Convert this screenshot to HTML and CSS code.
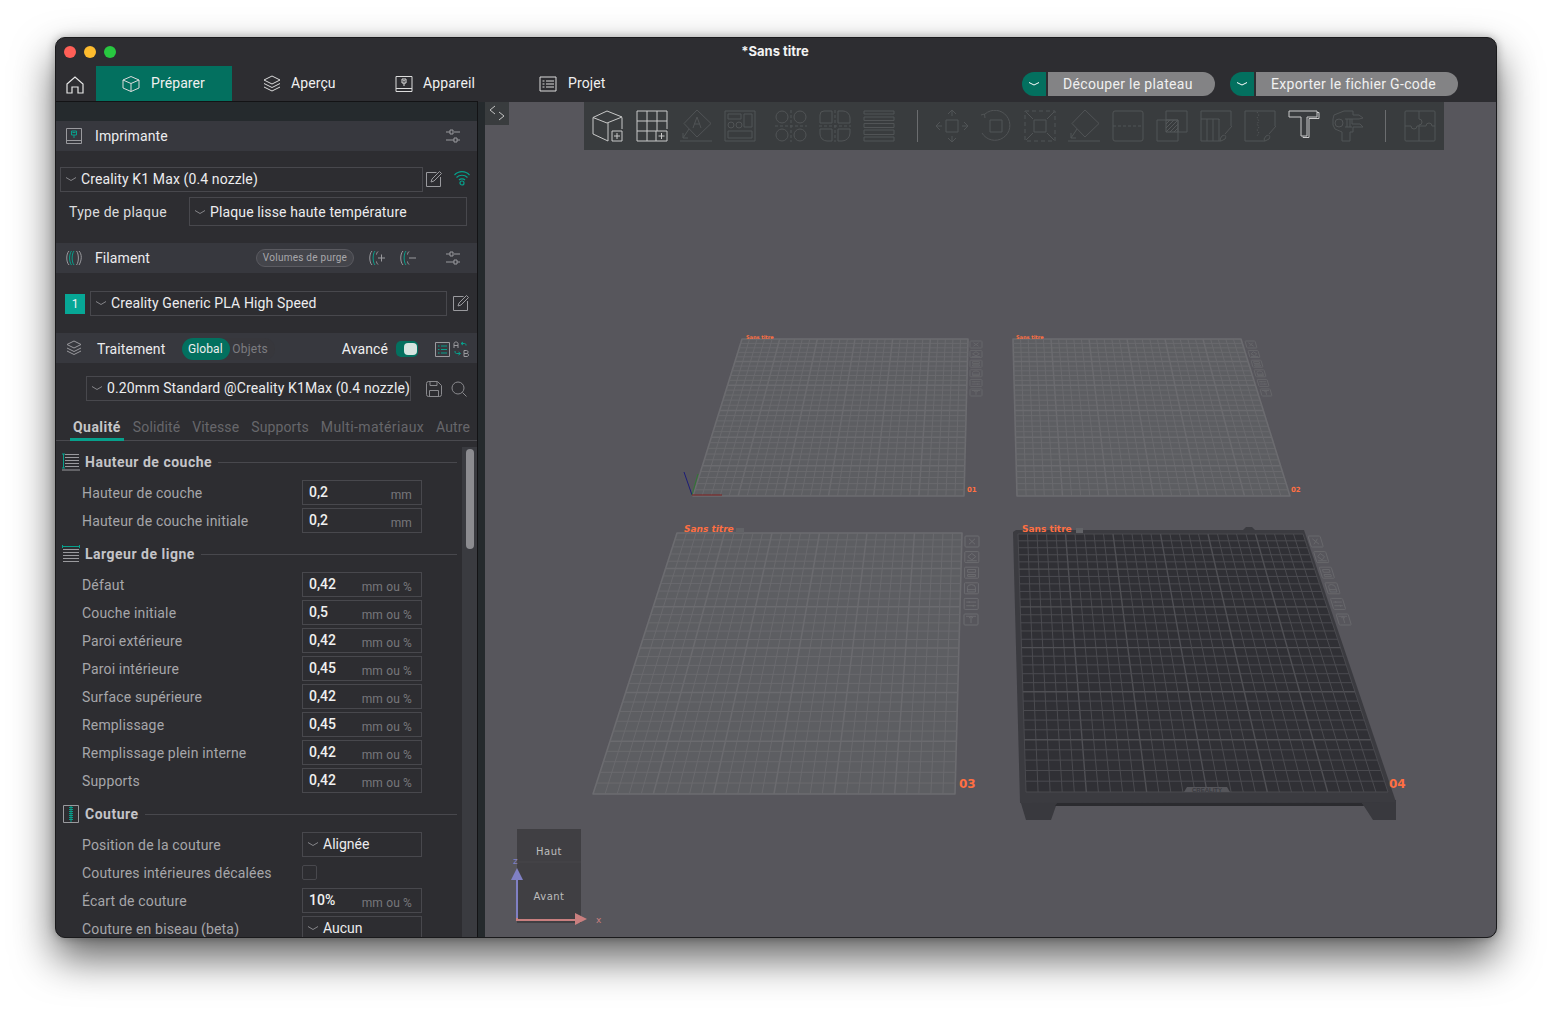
FILE: index.html
```html
<!DOCTYPE html>
<html lang="fr">
<head>
<meta charset="utf-8">
<title>Sans titre</title>
<link rel="stylesheet" href="styles.css">
</head>
<body>
<div class="window">
  <header class="titlebar">
    <div class="lights"><i class="light red"></i><i class="light yellow"></i><i class="light green"></i></div>
    <div class="title">*Sans titre</div>
  </header>
  <nav class="navbar">
    <svg class="home" viewBox="0 0 18 18"><path d="M1 8 9 1l8 7v9h-5v-6H6v6H1z"/></svg>
    <div class="tab active tab-prep">
      <svg class="ico18" viewBox="0 0 18 18"><path d="M9 1.500 17 5v8l-8 3.500L1 13V5zM1 5l8 3.500L17 5M9 8.500v8"/></svg>
      <span>Préparer</span>
    </div>
    <div class="tab tab-view">
      <svg class="ico18" viewBox="0 0 18 18"><path d="M9 1 17 5 9 9 1 5zM1 8.500l8 4 8-4M1 12l8 4 8-4"/></svg>
      <span>Aperçu</span>
    </div>
    <div class="tab tab-dev">
      <svg class="ico18" viewBox="0 0 18 18"><path d="M1 1.500h16v15H1zM1 13.500h16M7 4h4v4H7zM9 8v3M8 5.800h2"/></svg>
      <span>Appareil</span>
    </div>
    <div class="tab tab-proj">
      <svg class="ico18" viewBox="0 0 18 18"><path d="M1 2h16v14H1zM3.500 6h2M7 6h8M3.500 9h2M7 9h8M3.500 12h2M7 12h8"/></svg>
      <span>Projet</span>
    </div>
    <div class="actions">
      <div class="split"><span class="split-arrow"><svg class="chev-w" viewBox="0 0 12 6"><path d="M1 1.500l5 2.500 5-2.500"/></svg></span><span class="split-label slice">Découper le plateau</span></div>
      <div class="split"><span class="split-arrow"><svg class="chev-w" viewBox="0 0 12 6"><path d="M1 1.500l5 2.500 5-2.500"/></svg></span><span class="split-label export">Exporter le fichier G-code</span></div>
    </div>
  </nav>
  <div class="main">
    <aside class="sidebar">
      <div class="strip"></div>
      <div class="head">
        <svg class="ico16 teal-mix" viewBox="0 0 16 16"><path class="dim" d="M.5.500h15v15H.5zM.5 12.500h15"/><path d="M5.500 3h5v4h-5zM8 7v3M6.500 4.500h3"/></svg>
        <span class="head-title">Imprimante</span>
        <svg class="sliders" viewBox="0 0 16 14"><path d="M1 3h4M9 3h6M5 1h3v4H5zM1 11h8M12 11h3M9 9h3v4H9z"/></svg>
      </div>
      <div class="printer-row">
        <div class="combo combo-printer"><svg class="chev" viewBox="0 0 10 5"><path d="M0 .5l5 3 5-3"/></svg><span>Creality K1 Max (0.4 nozzle)</span></div>
        <svg class="edit" viewBox="0 0 16 16"><path d="M.5 1.500h10M.5 1.500v14h14V6M5 11l1-3 7.500-7.500 2 2L8 10z"/></svg>
        <svg class="wifi" viewBox="0 0 16 16"><path d="M.5 5c4-4.500 11-4.500 15 0M2.500 7.500c3-3 8-3 11 0M5 10c1.500-1.500 4.500-1.500 6 0"/><circle cx="8" cy="13" r="2"/></svg>
      </div>
      <div class="plate-row">
        <span class="plate-label">Type de plaque</span>
        <div class="combo combo-plate"><svg class="chev" viewBox="0 0 10 5"><path d="M0 .5l5 3 5-3"/></svg><span>Plaque lisse haute température</span></div>
      </div>
      <div class="head head-fil">
        <svg class="ico16 teal-mix" viewBox="0 0 16 16"><path class="dim" d="M3 1C0 4 0 12 3 15M13 1c3 3 3 9 0 14M10.500 1c2.500 3 2.500 11 0 14"/><path d="M5.500 1c-2.500 3-2.500 11 0 14M8 1C5.500 4 5.500 12 8 15"/></svg>
        <span class="head-title">Filament</span>
        <span class="purge">Volumes de purge</span>
        <svg class="fil-btn btn-add" viewBox="0 0 16 16"><path class="dim" d="M3 1C0 4 0 12 3 15"/><path class="tealp" d="M6 1C3.500 4 3.500 12 6 15"/><path d="M9 8h7M12.500 4.500v7M9 1.500C8 2.500 7.500 3.500 7.500 4.500M9 14.500C8 13.500 7.500 12.500 7.500 11.500"/></svg>
        <svg class="fil-btn btn-del" viewBox="0 0 16 16"><path class="dim" d="M3 1C0 4 0 12 3 15"/><path class="tealp" d="M6 1C3.500 4 3.500 12 6 15"/><path d="M9 8h7M9 1.500C8 2.500 7.500 3.500 7.500 4.500M9 14.500C8 13.500 7.500 12.500 7.500 11.500"/></svg>
        <svg class="sliders" viewBox="0 0 16 14"><path d="M1 3h4M9 3h6M5 1h3v4H5zM1 11h8M12 11h3M9 9h3v4H9z"/></svg>
      </div>
      <div class="filament-row">
        <span class="badge">1</span>
        <div class="combo combo-fil"><svg class="chev" viewBox="0 0 10 5"><path d="M0 .5l5 3 5-3"/></svg><span>Creality Generic PLA High Speed</span></div>
        <svg class="edit" viewBox="0 0 16 16"><path d="M.5 1.500h10M.5 1.500v14h14V6M5 11l1-3 7.500-7.500 2 2L8 10z"/></svg>
      </div>
      <div class="head head-proc">
        <svg class="ico16 dimlayers" viewBox="0 0 16 16"><path d="M8 1 15 4.500 8 8 1 4.500zM1 8l7 3.500L15 8M1 11l7 3.500 7-3.500"/></svg>
        <span class="head-title proc-title">Traitement</span>
        <div class="seg"><span class="seg-on">Global</span><span class="seg-off">Objets</span></div>
        <span class="adv">Avancé</span>
        <span class="toggle"><i class="knob"></i></span>
        <svg class="listicon" viewBox="0 0 15 15"><path class="dim" d="M.5.500h14v14H.5z"/><path d="M3 4h1.500M6 4h6M3 7.500h1.500M6 7.500h6M3 11h1.500M6 11h6"/></svg>
        <svg class="abicon" viewBox="0 0 16 16"><path class="dim" d="M1 7V2.500C1 .5 5 .5 5 2.500V7M1 4.500h4M11 9.500h2.500c2 0 2 3 0 3H11zM11 12.500h3c2 0 2 3 0 3h-3z"/><path d="M10 1l-2 1.500L10 4M8 2.500h3.500c1 0 1.500.5 1.500 2M2 10c0 2 .5 2.500 1.500 2.500H7M5.500 11 7.500 12.500 5.500 14"/></svg>
      </div>
      <div class="preset-row">
        <div class="combo combo-preset"><svg class="chev" viewBox="0 0 10 5"><path d="M0 .5l5 3 5-3"/></svg><span>0.20mm Standard @Creality K1Max (0.4 nozzle)</span></div>
        <svg class="save" viewBox="0 0 16 16"><path d="M.5 2.500a2 2 0 0 1 2-2h9l4 4v9a2 2 0 0 1-2 2h-11a2 2 0 0 1-2-2zM4 .5v4h7v-4M3.500 15.500v-6h9v6"/></svg>
        <svg class="search" viewBox="0 0 16 16"><circle cx="7" cy="7" r="6"/><path d="M11.500 11.500 15.500 15.500"/></svg>
      </div>
      <div class="tabs">
        <span class="ptab on">Qualité</span><span class="ptab">Solidité</span><span class="ptab">Vitesse</span><span class="ptab">Supports</span><span class="ptab wide">Multi-matériaux</span><span class="ptab">Autre</span>
      </div>
      <div class="scroll">
        <div class="params">
          <div class="sec">
            <svg class="sec-ico" viewBox="0 0 18 18"><path class="gl" d="M3 1.500h14M3 4.500h14M3 7.500h14M3 10.500h14M3 13.500h14M0 17h18"/><path class="tl" d="M0 1h3M1.500 1v14M0 15h3"/></svg>
            <span class="sec-title">Hauteur de couche</span><i class="sec-line"></i>
          </div>
          <div class="row"><span class="lbl">Hauteur de couche</span><div class="field"><b>0,2</b><em>mm</em></div></div>
          <div class="row"><span class="lbl">Hauteur de couche initiale</span><div class="field"><b>0,2</b><em>mm</em></div></div>

          <div class="sec">
            <svg class="sec-ico" viewBox="0 0 18 18"><path class="gl" d="M1 4.500h16M1 7.500h16M1 10.500h16M1 13.500h16M1 16.500h16"/><path class="tl" d="M0 1.500h18M.5 0v3M17.500 0v3"/></svg>
            <span class="sec-title">Largeur de ligne</span><i class="sec-line"></i>
          </div>
          <div class="row"><span class="lbl">Défaut</span><div class="field"><b>0,42</b><em>mm ou %</em></div></div>
          <div class="row"><span class="lbl">Couche initiale</span><div class="field"><b>0,5</b><em>mm ou %</em></div></div>
          <div class="row"><span class="lbl">Paroi extérieure</span><div class="field"><b>0,42</b><em>mm ou %</em></div></div>
          <div class="row"><span class="lbl">Paroi intérieure</span><div class="field"><b>0,45</b><em>mm ou %</em></div></div>
          <div class="row"><span class="lbl">Surface supérieure</span><div class="field"><b>0,42</b><em>mm ou %</em></div></div>
          <div class="row"><span class="lbl">Remplissage</span><div class="field"><b>0,45</b><em>mm ou %</em></div></div>
          <div class="row"><span class="lbl">Remplissage plein interne</span><div class="field"><b>0,42</b><em>mm ou %</em></div></div>
          <div class="row"><span class="lbl">Supports</span><div class="field"><b>0,42</b><em>mm ou %</em></div></div>

          <div class="sec">
            <svg class="sec-ico" viewBox="0 0 18 18"><path class="gl" d="M1.500.5h15v17h-15z"/><path class="tl" d="M9 1v16M7 2.500h4M7 4.500h4M7 6.500h4M7 8.500h4M7 10.500h4M7 12.500h4M7 14.500h4"/></svg>
            <span class="sec-title">Couture</span><i class="sec-line"></i>
          </div>
          <div class="row"><span class="lbl">Position de la couture</span><div class="field sel"><svg class="chev" viewBox="0 0 10 5"><path d="M0 .5l5 3 5-3"/></svg><span>Alignée</span></div></div>
          <div class="row"><span class="lbl">Coutures intérieures décalées</span><div class="check"></div></div>
          <div class="row"><span class="lbl">Écart de couture</span><div class="field"><b>10%</b><em>mm ou %</em></div></div>
          <div class="row"><span class="lbl">Couture en biseau (beta)</span><div class="field sel"><svg class="chev" viewBox="0 0 10 5"><path d="M0 .5l5 3 5-3"/></svg><span>Aucun</span></div></div>
        </div>
        <div class="track"><i class="thumb"></i></div>
      </div>
    </aside>
    <i class="gutter"></i>
    <section class="canvas">
      <svg id="scene" class="scene" viewBox="485 102 1012 836"></svg>
      <div class="topzone">
        <div class="collapse"><svg viewBox="0 0 16 16"><path d="M6 1 1 5l5 4M10 7l5 4-5 4"/></svg></div>
        <div class="toolbar">
          <svg class="ti on" viewBox="0 0 32 32"><path d="M1 7.500 15 1l15 6-15 6zM1 7.500V24l15 7V13M30 7.500V19"/><path d="M20 21h10v10H20zM25 23v6M22 26h6"/></svg>
          <svg class="ti on" viewBox="0 0 32 32"><path d="M1 1h30v18M1 1v30h19M11 1v30M21 1v20M1 11h30M1 21h19"/><path d="M20 21h11v10H20zM25.500 23v6M22.500 26h6"/></svg>
          <svg class="ti" viewBox="0 0 32 32"><path d="M17 0 31 13.500 17 27 4 13.500zM9 19 3 28M3 28h5M3 28v-5M0 31h32M13 18l4-11 4 11M14.500 14h5"/></svg>
          <svg class="ti" viewBox="0 0 32 32"><path d="M1 1h30v30H1zM4 4h13v5H4zM20 4h8v13h-8zM4 21h24v7H4z"/><circle cx="7" cy="15" r="3"/><circle cx="15" cy="15" r="3"/></svg>
          <svg class="ti g1" viewBox="0 0 32 32"><circle cx="7" cy="7" r="6"/><circle cx="25" cy="7" r="6"/><circle cx="7" cy="25" r="6"/><circle cx="25" cy="25" r="6"/><path d="M16 0v32M0 16h32" stroke-dasharray="3 2"/></svg>
          <svg class="ti" viewBox="0 0 32 32"><path d="M1 13V5a4 4 0 0 1 4-4h8v12zM19 1h5a7 7 0 0 1 7 7v5H19zM1 19h12v12H8a7 7 0 0 1-7-7zM19 19h12v4a8 8 0 0 1-8 8h-4z"/><path d="M16 0v32M0 16h32" stroke-dasharray="3 2"/></svg>
          <svg class="ti" viewBox="0 0 32 32"><path d="M1 1h30v3H1zM1 7h30v3.500H1zM1 13.500h30v4H1zM1 20h30v4.500H1zM1 27h30v4H1z"/></svg>
          <i class="tsep"></i>
          <svg class="ti" viewBox="0 0 32 32"><path d="M10 10h12v12H10zM16 0v6M12 4l4-4 4 4M16 32v-6M12 28l4 4 4-4M0 16h6M4 12l-4 4 4 4M32 16h-6M28 12l4 4-4 4"/></svg>
          <svg class="ti" viewBox="0 0 32 32"><path d="M10 10h12v12H10zM5 4a15 15 0 1 1-3 19M1 5l3.500-1L5 8"/></svg>
          <svg class="ti" viewBox="0 0 32 32"><path d="M1 1h30v30H1z" stroke-dasharray="4 3"/><path d="M10 10h12v12H10zM2 2l7 7M30 2l-7 7M2 30l7-7M30 30l-7-7"/></svg>
          <svg class="ti" viewBox="0 0 32 32"><path d="M17 0 31 13.500 17 27 4 13.500zM9 19 3 28M3 28h5M3 28v-5M0 31h32"/></svg>
          <svg class="ti" viewBox="0 0 32 32"><path d="M3 1h26a2 2 0 0 1 2 2v26a2 2 0 0 1-2 2H3a2 2 0 0 1-2-2V3a2 2 0 0 1 2-2z"/><path d="M1 16h30" stroke-dasharray="3 2"/></svg>
          <svg class="ti" viewBox="0 0 32 32"><path d="M10 10V1h21v21H22M1 10h21v21H1z"/><path class="hatch" d="M10 10h12v12H10zM10 14l4-4M10 18l8-8M10 22l12-12M14 22l8-8M18 22l4-4"/></svg>
          <svg class="ti" viewBox="0 0 32 32"><path d="M1 1h30v15M1 1v30h20M7 9v22M13 9v22M19 9v22M1 9h18v1"/><path d="M32 16 25 24M22 26c3-2 5 0 3 3l-4 2-1-2z"/></svg>
          <svg class="ti" viewBox="0 0 32 32"><path d="M1 1h30v15M1 1v30h20"/><path d="M13 2l2 3-2 3 2 3-2 3 2 3-2 3 2 3-2 3" stroke-dasharray="1.500 1.500"/><path d="M32 16 25 24M22 26c3-2 5 0 3 3l-4 2-1-2z"/></svg>
          <svg class="ti on" viewBox="0 0 32 32"><path d="M1 1h28v6H19v19h-6V7H1zM29 2.500h2V8.500H21v19h-6v-1"/></svg>
          <svg class="ti" viewBox="0 0 32 32"><path d="M2 5 12 1h9v4h6l4 3-4 1H20v5h8l3 3H21v5h-3v9h-8v-9l-7-3-2-4V9z"/><circle cx="7" cy="13" r="4"/><path d="M13 9h7M13 17h7M15 9v8M18 9v8"/></svg>
          <i class="tsep g3"></i>
          <svg class="ti" viewBox="0 0 32 32"><path d="M2 1h28a1 1 0 0 1 1 1v28a1 1 0 0 1-1 1H2a1 1 0 0 1-1-1V2a1 1 0 0 1 1-1zM15 1v8a3 3 0 1 1 0 6v16M1 16h6a3 3 0 1 0 6 0h9a3 3 0 1 1 6 0h3"/></svg>
        </div>
      </div>
    </section>
  </div>
</div>
<script src="app.js"></script>
</body>
</html>
```
FILE: styles.css
```css
* { box-sizing: border-box; }
html, body { margin: 0; height: 100%; }
body {
  background: #fff;
  padding: 37px 55px 0;
  font: 14px/20px Roboto, "Noto Sans", sans-serif;
  color: #e8e8ea;
  overflow: hidden;
}
svg { display: block; fill: none; stroke-width: 1; flex: none; }
i, em { font-style: normal; }

.window {
  width: 1442px;
  height: 901px;
  display: flex;
  flex-direction: column;
  background: #2d2d31;
  border: 1px solid #1a1a1c;
  border-radius: 10px;
  overflow: hidden;
  box-shadow: 0 20px 42px rgba(0,0,0,.62), 0 0 10px rgba(0,0,0,.28);
}
.titlebar { height: 28px; position: relative; display: flex; align-items: center; justify-content: center; flex: none; }
.lights { position: absolute; left: 8px; top: 8px; display: flex; gap: 8px; }
.light { width: 12px; height: 12px; border-radius: 50%; }
.red { background: #ff5f57; } .yellow { background: #febc2e; } .green { background: #28c840; }
.title { font: 700 13px/16px "Inter", "Noto Sans", sans-serif; color: #f2f2f2; margin-left: -2px; margin-top: -2px; }

.navbar { height: 36px; display: flex; align-items: stretch; flex: none; padding-left: 10px; letter-spacing: .1px; }
.home { width: 18px; height: 18px; margin: 10px 12px 0 0; stroke: #e6e6e6; stroke-width: 1.200; }
.tab { display: flex; align-items: center; gap: 10px; color: #f0f0f0; font-size: 14px; padding-bottom: 2px; }
.ico18 { width: 18px; height: 18px; stroke: #dcdcdc; margin-top: 2px; }
.tab.active { background: #03705f; }
.tab-prep { width: 136px; padding-left: 26px; gap: 11px; }
.tab-view { width: 136px; padding-left: 31px; }
.tab-dev { width: 136px; padding-left: 27px; }
.tab-proj { padding-left: 35px; gap: 11px; }
.actions { margin-left: auto; margin-right: 38px; display: flex; gap: 15px; padding-top: 6px; }
.split { display: flex; gap: 2px; height: 24px; }
.split-arrow { width: 24px; background: #03705f; border-radius: 12px 0 0 12px; display: flex; align-items: center; justify-content: center; }
.chev-w { width: 12px; height: 6px; stroke: #fff; }
.split-label { background: #838385; border-radius: 0 12px 12px 0; line-height: 24px; color: #f0f0f0; font-size: 14px; padding-left: 15px; letter-spacing: .32px; }
.slice { width: 167px; }
.export { width: 202px; }

.main { flex: 1; display: flex; min-height: 0; }
.sidebar { width: 422px; flex: none; display: flex; flex-direction: column; border-right: 1px solid #131315; border-top: 1px solid #131315; margin-top: -1px; min-height: 0; }
.gutter { width: 7px; flex: none; background: #252a2d; }
.strip { height: 19px; background: #252a2d; flex: none; }
.head { height: 30px; background: #37383e; display: flex; align-items: center; padding: 0 16px 0 10px; flex: none; letter-spacing: .1px; }
.head-fil { margin-top: 17px; }
.head-proc { margin-top: 17px; padding-top: 2px; padding-right: 8px; }
.ico16 { width: 16px; height: 16px; stroke: #07a08c; }
.dim { stroke: #9a9a9e; }
.tealp { stroke: #07a08c; }
.head-title { margin-left: 13px; font-size: 14px; color: #ececee; flex: 1; }
.sliders { width: 16px; height: 14px; stroke: #9a9a9e; }
.printer-row { display: flex; align-items: center; margin: 16px 0 0 4px; height: 25px; flex: none; }
.combo { border: 1px solid #48484d; display: flex; align-items: center; color: #ececee; gap: 5px; padding: 0 0 2px 5px; flex: none; white-space: nowrap; overflow: hidden; letter-spacing: .12px; }
.chev { width: 10px; height: 5px; stroke: #86868a; margin-top: 2px; }
.combo-printer { width: 363px; height: 25px; }
.edit { width: 16px; height: 16px; stroke: #9a9a9e; margin-left: 3px; }
.printer-row .edit { margin-left: 3px; margin-top: -2px; }
.wifi { width: 16px; height: 16px; stroke: #07a08c; margin-left: 12px; margin-top: -3px; stroke-width: 1.200; }
.plate-row { display: flex; align-items: center; margin: 5px 0 0 13px; flex: none; }
.plate-label { width: 120px; color: #dcdcde; letter-spacing: .28px; }
.combo-plate { width: 278px; height: 29px; padding-bottom: 0; }
.purge { height: 18px; width: 98px; border: 1px solid #5a5a60; background: #44454b; border-radius: 9px; font-size: 10px; line-height: 16px; text-align: center; color: #a8a8ac; margin-right: 15px; flex: none; letter-spacing: .25px; }
.fil-btn { width: 16px; height: 16px; stroke: #9a9a9e; }
.btn-del { margin-left: 15px; margin-right: 29px; }
.filament-row { display: flex; align-items: center; margin: 18px 0 0 9px; height: 25px; flex: none; }
.badge { width: 20px; height: 20px; background: #07a796; color: #f4f4f4; font-size: 12px; line-height: 20px; text-align: center; margin-right: 5px; }
.combo-fil { width: 357px; height: 25px; }
.filament-row .edit { margin-left: 6px; margin-top: -2px; }
.dimlayers { stroke: #9a9a9e; margin-top: -3px; }
.proc-title { margin-left: 15px; flex: none; }
.seg { margin-left: 17px; width: 93px; height: 22px; border-radius: 11px; background: #37373c; display: flex; font-size: 12px; line-height: 22px; margin-top: -1px; }
.seg-on { width: 48px; background: #03705f; border-radius: 11px; text-align: center; color: #eee; padding-right: 2px; }
.seg-off { padding-left: 2px; color: #7c7c80; letter-spacing: .2px; }
.adv { margin-left: 67px; color: #f0f0f0; }
.toggle { width: 22px; height: 16px; border-radius: 5px; background: #03705f; margin-left: 8px; padding: 2px 1px 2px 8px; flex: none; }
.knob { display: block; width: 13px; height: 12px; border-radius: 4px; background: #d6e4e0; }
.listicon { width: 15px; height: 15px; stroke: #07a08c; margin-left: 17px; }
.abicon { width: 16px; height: 16px; stroke: #07a08c; margin-left: 3px; }
.preset-row { display: flex; align-items: center; margin: 13px 0 0 30px; height: 25px; flex: none; }
.combo-preset { width: 325px; height: 25px; }
.save, .search { width: 16px; height: 16px; stroke: #8a8a8e; }
.save { margin-left: 15px; }
.search { margin-left: 9px; }
.tabs { height: 40px; display: flex; gap: 12px; padding: 15px 0 0 17px; border-bottom: 1px solid #4a4a4f; flex: none; white-space: nowrap; letter-spacing: .12px; }
.ptab { color: #67676b; height: 25px; line-height: 22px; }
.ptab.wide { letter-spacing: .38px; }
.ptab.on { color: #c6c6c8; font-weight: 700; letter-spacing: .45px; position: relative; }
.ptab.on::after { content: ""; position: absolute; left: -3px; right: -3px; bottom: 0; height: 3px; background: #07a08c; }

.scroll { flex: 1; display: flex; min-height: 0; overflow: hidden; }
.params { width: 406px; flex: none; padding: 9px 5px 0 6px; }
.track { width: 15px; flex: none; margin-top: 6px; background: #3a3b40; padding: 2px 3px 0 4px; }
.thumb { display: block; width: 8px; height: 100px; border-radius: 4px; background: #8c8c90; }
.sec { height: 24px; display: flex; align-items: center; gap: 5px; margin-bottom: 6px; }
.row + .sec { margin-top: 9px; }
.sec-ico { width: 18px; height: 18px; }
.gl { stroke: #9a9a9e; }
.tl { stroke: #07a08c; }
.sec-title { font-weight: 700; color: #c4c4c8; letter-spacing: .5px; }
.sec-line { flex: 1; height: 1px; background: #48484d; margin-left: 1px; }
.row { display: grid; grid-template-columns: 220px 120px; padding-left: 20px; height: 25px; margin-bottom: 3px; align-items: center; white-space: nowrap; }
.lbl { color: #a6a6aa; letter-spacing: .17px; }
.field { height: 25px; border: 1px solid #48484d; display: flex; justify-content: space-between; padding: 0 9px 0 6px; align-items: center; }
.field b { font-weight: 500; color: #f0f0f0; margin-top: -2px; }
.field em { font-size: 12px; color: #77777b; margin-top: 4px; letter-spacing: .15px; }
.field.sel { justify-content: flex-start; gap: 5px; padding: 0 0 2px 5px; color: #ececee; }
.check { width: 15px; height: 15px; border: 1px solid #48484d; border-radius: 2px; }

.canvas { flex: 1; min-width: 0; position: relative; background: #57565c; overflow: hidden; }
.scene { width: 1012px; height: 836px; position: absolute; left: 0; top: 0; }
.topzone { position: relative; display: flex; align-items: flex-start; }
.collapse { width: 24px; height: 23px; background: #393c3e; padding: 3px 4px; flex: none; }
.collapse svg { width: 16px; height: 16px; stroke: #c4c4c4; }
.toolbar { margin-left: 75px; width: 860px; height: 48px; background: #393c3e; display: flex; align-items: center; padding-left: 8px; gap: 12px; }
.ti { width: 32px; height: 32px; stroke: #515456; }
.ti.on { stroke: #c9c9c9; }
.g1 { margin-left: 7px; }
.tsep { width: 1px; height: 32px; background: #6b6d6f; margin: 0 6px 0 10px; flex: none; }
.tsep.g3 { margin: 0 6px 0 9px; }
.hatch { stroke: #55585a; }
.plate-lbl { fill: #ff6f42; font-family: "DejaVu Sans", sans-serif; font-weight: 700; }
.plate-lbl.it { font-style: italic; }
.cube-txt { fill: #bdbdbd; font: 10px "DejaVu Sans", sans-serif; letter-spacing: .5px; }
.logo-txt { fill: #3a3a3f; font: 700 6px "Liberation Sans", sans-serif; }
```
FILE: app.js
```js
// Draws the four build plates of the 3D view (perspective grids).
(function () {
  var NS = 'http://www.w3.org/2000/svg';
  var scene = document.getElementById('scene');

  function add(tag, attrs, text) {
    var n = document.createElementNS(NS, tag);
    for (var k in attrs) n.setAttribute(k, attrs[k]);
    if (text) n.textContent = text;
    scene.appendChild(n);
    return n;
  }
  function pts(a) { return a.map(function (p) { return p.join(','); }).join(' '); }
  function mix(a, b, t) { return [a[0] + (b[0] - a[0]) * t, a[1] + (b[1] - a[1]) * t]; }
  function proj(v, r) { return v * r / ((1 - v) + v * r); }

  function grid(q, o) {
    var tl = q[0], tr = q[1], br = q[2], bl = q[3];
    var r = (tr[0] - tl[0]) / (br[0] - bl[0]);
    add('polygon', { points: pts(q), fill: o.fill, stroke: o.edge, 'stroke-width': o.edgeW, 'stroke-linejoin': 'round' });
    var n = 30, i, t, a, b;
    for (i = 1; i < n; i++) {
      var maj = i % 5 === 0;
      a = mix(tl, tr, i / n); b = mix(bl, br, i / n);
      add('line', { x1: a[0], y1: a[1], x2: b[0], y2: b[1], stroke: maj ? o.majLine : o.line, 'stroke-width': maj ? o.maj : o.min });
      t = proj(i / n, r);
      a = mix(tl, bl, t); b = mix(tr, br, t);
      add('line', { x1: a[0], y1: a[1], x2: b[0], y2: b[1], stroke: maj ? o.majLine : o.line, 'stroke-width': maj ? o.maj : o.min });
    }
  }

  // the six small plate buttons, drawn in a 14x12 box
  var glyphs = [
    'M4 3l6 6M10 3l-6 6',
    'M7 2l4 3.500-4 3.500-4-3.500zM2 10h10',
    'M3 2.500h8v3H3zM3 8h8v2H3z',
    'M3 10V5a4 3 0 0 1 8 0v5zM3 7.500h8',
    'M2 4h10M2 8h10M5 3v2M9 7v2',
    'M2 2.500h10M7 2.500V10M5 4.500l2-2 2 2'
  ];
  function sideBoxes(x0, y0, x1, y1, w, h, skew, col) {
    glyphs.forEach(function (d, i) {
      var x = x0 + (x1 - x0) * i / 5, y = y0 + (y1 - y0) * i / 5;
      var g = add('g', { transform: 'translate(' + x + ' ' + y + ') skewX(' + skew + ') scale(' + (w / 14) + ' ' + (h / 12) + ')', fill: 'none', stroke: col });
      var rect = document.createElementNS(NS, 'rect');
      rect.setAttribute('width', 14); rect.setAttribute('height', 12); rect.setAttribute('rx', 1);
      rect.setAttribute('vector-effect', 'non-scaling-stroke');
      g.appendChild(rect);
      var path = document.createElementNS(NS, 'path');
      path.setAttribute('d', d);
      path.setAttribute('vector-effect', 'non-scaling-stroke');
      g.appendChild(path);
    });
  }
  var light = { fill: '#5d5e62', edge: '#6c6c70', edgeW: 1.6, line: '#6a6a6e', majLine: '#6b6b6f', maj: 1.5, min: 1 };

  // plate 4 body (selected plate, with its feet)
  add('polygon', { points: '1020,800 1026,820 1051,820 1057,803 1362,803 1373,820 1396,820 1396,800', fill: '#39393e' });
  add('polygon', { points: '1057,803 1362,803 1364,806 1055,806', fill: '#2b2b2f' });
  add('polygon', { points: '1013,532 1016,530 1304,530 1396,802 1020,803', fill: '#3b3b40' });
  add('polygon', { points: '1243,530 1246,527 1252,527 1255,530', fill: '#3b3b40' });

  grid([[742, 339], [968, 339], [964, 496], [693, 496]], light);
  grid([[1013, 339], [1241, 339], [1290, 496], [1017, 496]], light);
  grid([[677, 533], [962, 533], [955, 794], [593, 794]], light);
  grid([[1018, 534], [1303, 534], [1388, 792], [1026, 792]],
    { fill: '#303035', edge: '#4a4a4f', edgeW: 1, line: '#4b4b50', majLine: '#505055', maj: 1.4, min: 1 });

  add('polygon', { points: '1184,792 1187,787 1227,787 1230,792', fill: '#55555a' });
  add('text', { x: 1207, y: 792, 'text-anchor': 'middle', 'class': 'logo-txt' }, 'CREALITY');

  sideBoxes(970, 341, 970, 389, 12, 7, 0, '#66666a');
  sideBoxes(1245, 341, 1260, 389, 10, 7, 16, '#66666a');
  sideBoxes(965, 536, 964, 614, 14, 11, 0, '#6c6c70');
  sideBoxes(1308, 536, 1336, 614, 12, 11, 17, '#68686c');

  // labels
  add('text', { x: 746, y: 339, 'font-size': 5, 'class': 'plate-lbl' }, 'Sans titre');
  add('text', { x: 1016, y: 339, 'font-size': 5, 'class': 'plate-lbl' }, 'Sans titre');
  add('text', { x: 684, y: 532, 'font-size': 9, 'class': 'plate-lbl it' }, 'Sans titre');
  add('text', { x: 1022, y: 532, 'font-size': 9, 'class': 'plate-lbl' }, 'Sans titre');
  add('rect', { x: 736, y: 528, width: 8, height: 5, fill: '#626367' });
  add('rect', { x: 1076, y: 528, width: 7, height: 5, fill: '#626367' });
  add('text', { x: 967, y: 492, 'font-size': 7, 'class': 'plate-lbl' }, '01');
  add('text', { x: 1291, y: 492, 'font-size': 7, 'class': 'plate-lbl' }, '02');
  add('text', { x: 959, y: 788, 'font-size': 12, 'class': 'plate-lbl' }, '03');
  add('text', { x: 1389, y: 788, 'font-size': 12, 'class': 'plate-lbl' }, '04');

  // origin axes of plate 1
  add('line', { x1: 692, y1: 495, x2: 684, y2: 472, stroke: '#1c1c78', 'stroke-width': 1 });
  add('line', { x1: 692, y1: 495, x2: 698, y2: 474, stroke: '#2f7a32', 'stroke-width': 1 });
  add('line', { x1: 692, y1: 495, x2: 722, y2: 495, stroke: '#7c2a2a', 'stroke-width': 1.2 });

  // navigation cube and axes
  add('rect', { x: 517, y: 829, width: 64, height: 94, fill: '#403f43' });
  add('line', { x1: 517, y1: 862, x2: 581, y2: 862, stroke: '#4a4a4e', 'stroke-width': 0.6 });
  add('text', { x: 549, y: 855, 'text-anchor': 'middle', 'class': 'cube-txt' }, 'Haut');
  add('text', { x: 549, y: 900, 'text-anchor': 'middle', 'class': 'cube-txt' }, 'Avant');
  add('path', { d: 'M517 880V920H576', fill: 'none', stroke: '#c97f7f', 'stroke-width': 2 });
  add('path', { d: 'M517 880V918', fill: 'none', stroke: '#8080c4', 'stroke-width': 2 });
  add('polygon', { points: '517,868 523,880 511,880', fill: '#8080c4' });
  add('polygon', { points: '587,919 575,913 575,925', fill: '#c97f7f' });
  add('text', { x: 513, y: 864, 'font-size': 9, fill: '#8080c4', 'font-family': 'DejaVu Sans' }, 'z');
  add('text', { x: 596, y: 923, 'font-size': 9, fill: '#c97f7f', 'font-family': 'DejaVu Sans' }, 'x');
})();
```
